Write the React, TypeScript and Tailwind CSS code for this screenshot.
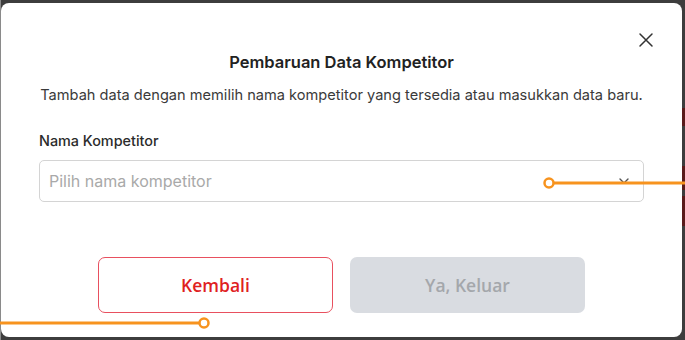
import React from "react";

export default function App() {
  return (
    <div className="relative w-[685px] h-[340px] overflow-hidden bg-[#3d3d3d]" style={{ fontFamily: "Inter, 'Noto Sans', sans-serif" }}>
      <div className="absolute left-0 top-0 w-[1px] h-full bg-[#8a8a8a]" />
      <div className="absolute right-0 top-[108px] w-[3px] h-[18px] bg-[#5a1a1a]" />
      <div className="absolute right-0 top-[166px] w-[3px] h-[24px] bg-[#5a1a1a]" />
      <div className="absolute right-0 top-[196px] w-[3px] h-[30px] bg-[#5a1a1a]" />
      <div className="ml-[1px] mt-[3px] w-[681px] h-[334px] rounded-[8px] bg-white relative flex flex-col">
        <button className="absolute top-[29px] right-[28px] w-[16px] h-[16px] text-[#333]">
          <svg viewBox="0 0 16 16" width="16" height="16" fill="none" stroke="currentColor" strokeWidth="1.5" strokeLinecap="round">
            <path d="M2 2L14 14M14 2L2 14" />
          </svg>
        </button>
        <h2 className="pt-[47px] text-center text-[16.5px] leading-[24px] font-semibold text-[#222]">Pembaruan Data Kompetitor</h2>
        <p className="mt-[11px] text-center text-[14.6px] leading-[20px] text-[#3a3a3a]">
          Tambah data dengan memilih nama kompetitor yang tersedia atau masukkan data baru.
        </p>
        <div className="px-[38px] mt-[26px] flex flex-col">
          <label className="text-[14.4px] leading-[20px] font-medium text-[#2b2b2b]">Nama Kompetitor</label>
          <div className="mt-[9px] h-[42px] border border-[#d4d4d4] rounded-[5px] flex items-center justify-between pl-[9px] pr-[14px]">
            <span className="text-[16px] text-[#a9a9a9]">Pilih nama kompetitor</span>
            <svg width="10" height="6" viewBox="0 0 10 6" fill="none" stroke="#555" strokeWidth="1.4" strokeLinecap="round" strokeLinejoin="round">
              <path d="M1 1L5 5L9 1" />
            </svg>
          </div>
        </div>
        <div className="mt-[55px] flex justify-center gap-[17px]" style={{ fontFamily: "'Open Sans', sans-serif" }}>
          <button className="w-[235px] h-[56px] rounded-[7px] border border-[#e8505f] text-[#e0211f] text-[17.5px] font-semibold">Kembali</button>
          <button className="w-[235px] h-[56px] rounded-[7px] bg-[#d9dce1] text-[#a4a7ab] text-[17.5px] font-semibold">Ya, Keluar</button>
        </div>
      </div>
      <svg className="absolute left-0 top-0 pointer-events-none" width="685" height="340">
        <line x1="549" y1="183" x2="685" y2="183" stroke="#f7931e" strokeWidth="3" />
        <circle cx="549" cy="183" r="4.5" fill="white" stroke="#f7931e" strokeWidth="2.5" />
        <line x1="0" y1="323" x2="204" y2="323" stroke="#f7931e" strokeWidth="3" />
        <circle cx="204" cy="323" r="4.5" fill="white" stroke="#f7931e" strokeWidth="2.5" />
      </svg>
    </div>
  );
}
